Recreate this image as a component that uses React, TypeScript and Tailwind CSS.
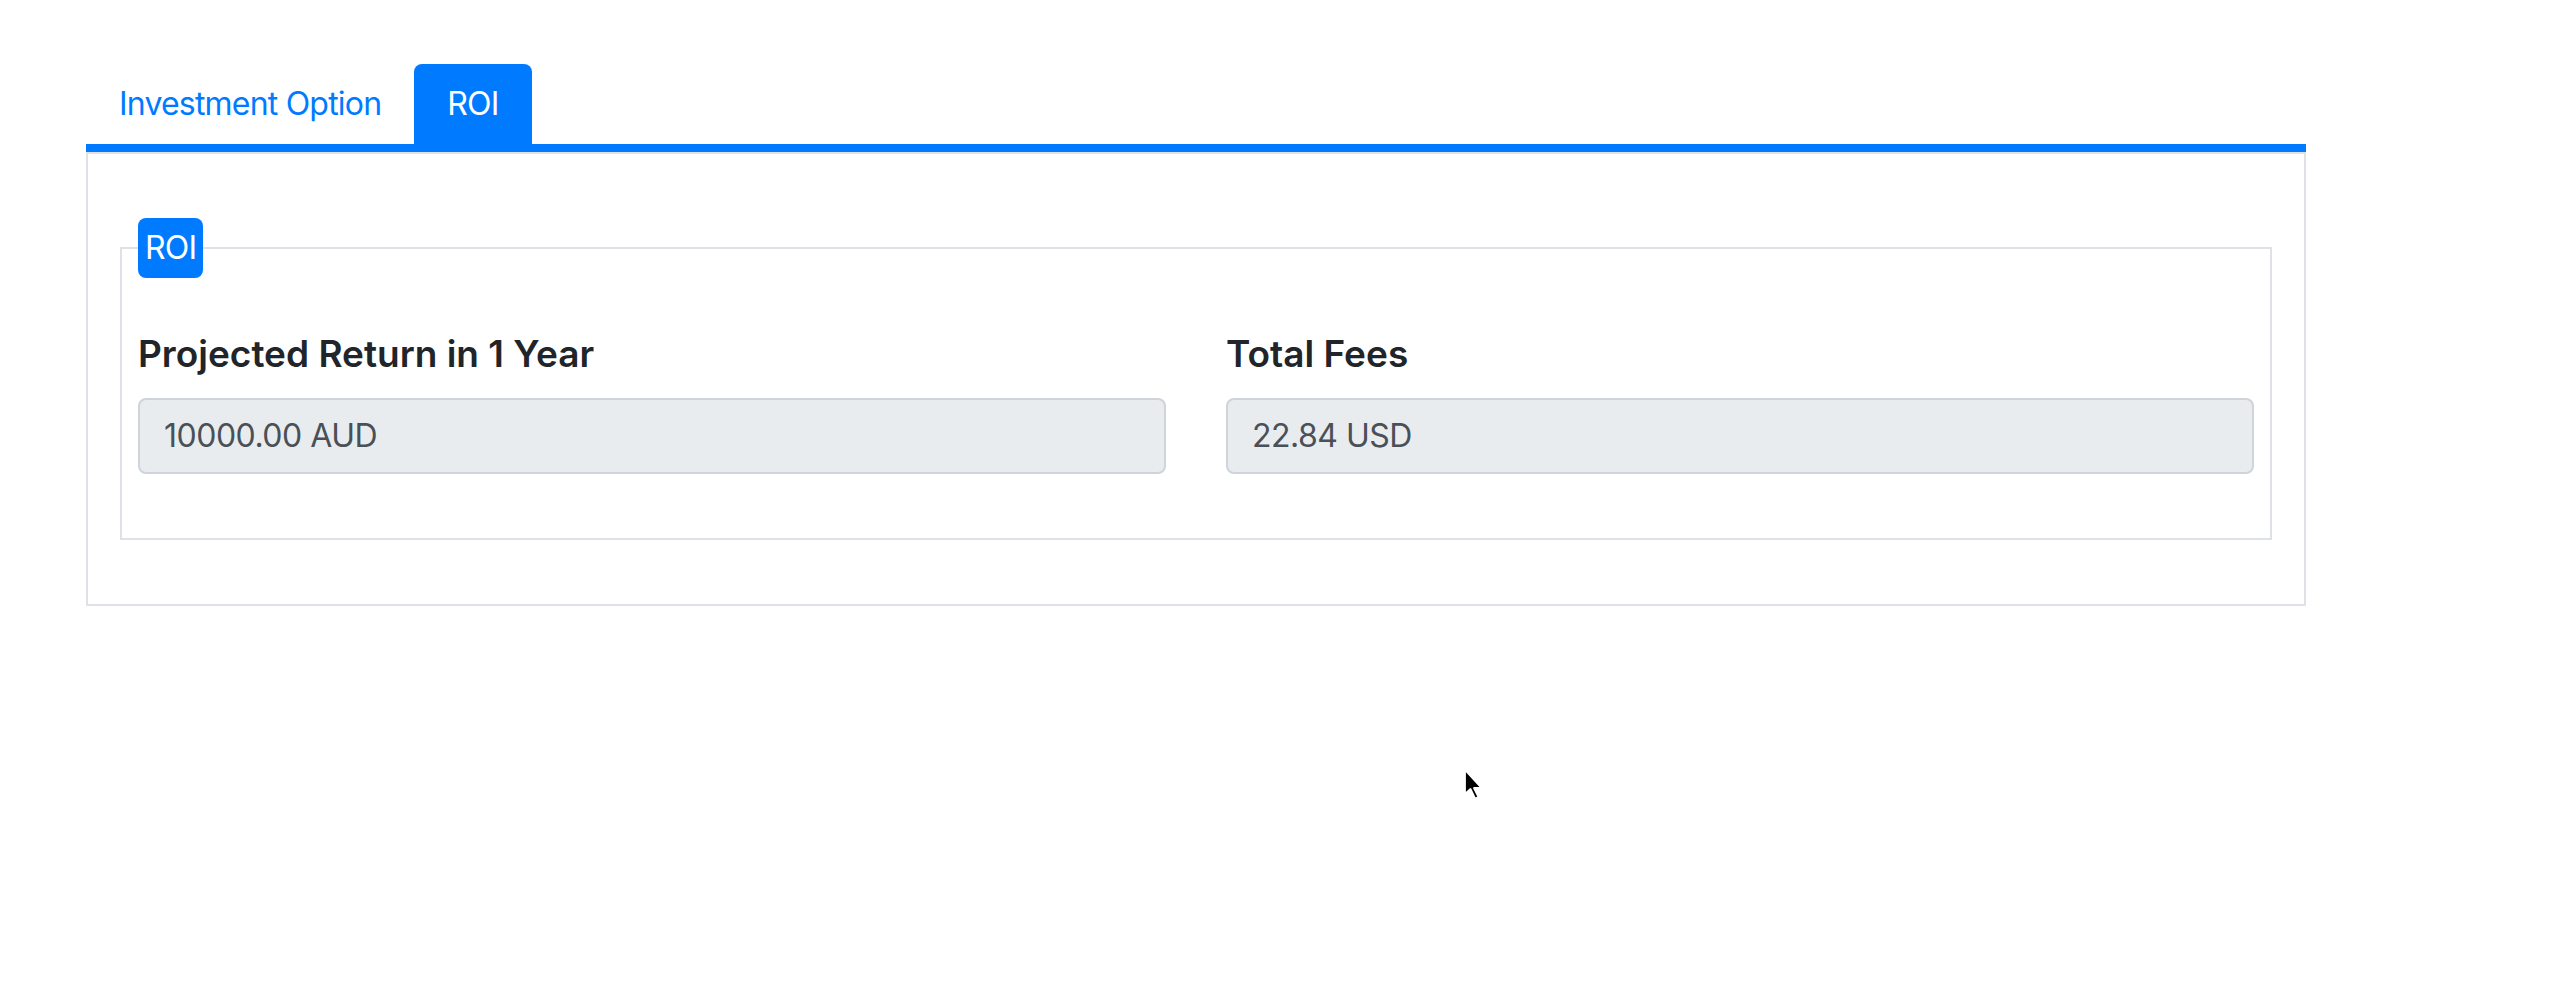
const Cursor = () => (
	<svg className="absolute left-[1463px] top-[768px]" width="22" height="34" viewBox="0 0 22 34">
		<path d="M2 2 L2 26 L7.5 21 L12 30.5 L15.5 29 L11 20 L18.5 20 Z" fill="#000" stroke="#fff" strokeWidth="1.8" strokeLinejoin="round" />
	</svg>
);

const Field = ({ label, value }: { label: string; value: string }) => (
	<div className="flex flex-col">
		<h5 className="text-[37px] leading-[43px] font-semibold text-[#212529] mb-[23px]">{label}</h5>
		<div className="h-[76px] flex items-center px-[24px] border-2 border-[#ced4da] rounded-[8px] bg-[#e9ecef] text-[32px] tracking-[-0.5px] text-[#495057]">
			{value}
		</div>
	</div>
);

const App = () => (
	<div className="relative min-h-[986px] bg-white font-['Inter',sans-serif] pt-[64px] pl-[86px]">
		<div className="w-[2220px]">
			<nav className="flex border-b-[8px] border-[#007bff]">
				<a href="#" className="px-[33px] py-[16px] text-[32px] leading-[48px] tracking-[-0.8px] text-[#007bff]">
					Investment Option
				</a>
				<a href="#" className="px-[33px] py-[16px] text-[32px] leading-[48px] tracking-[-0.8px] text-white bg-[#007bff] rounded-t-[8px]">
					ROI
				</a>
			</nav>

			<div className="border-2 border-[#dee2e6] px-[32px] py-[64px]">
				<fieldset className="border-2 border-[#dee2e6] px-[16px] pt-[16px] pb-[64px]">
					<legend className="px-[7px] py-[6px] text-[32px] leading-[48px] tracking-[-0.8px] text-white bg-[#007bff] rounded-[8px]">ROI</legend>
					<div className="grid grid-cols-2 gap-x-[60px] pt-[38px]">
						<Field label="Projected Return in 1 Year" value="10000.00 AUD" />
						<Field label="Total Fees" value="22.84 USD" />
					</div>
				</fieldset>
			</div>
		</div>
		<Cursor />
	</div>
);

export default App;
